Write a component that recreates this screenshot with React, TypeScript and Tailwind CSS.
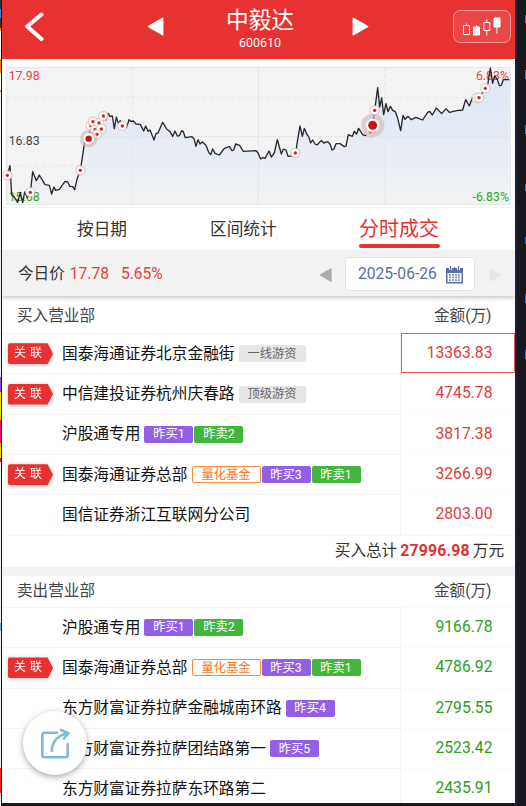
import clsx from "clsx";

type TagKind = "plain" | "fund" | "buy" | "sell";

interface Tag {
  kind: TagKind;
  label: string;
}

interface Seat {
  name: string;
  amount: string;
  linked?: boolean;
  active?: boolean;
  tags?: Tag[];
}

const buySeats: Seat[] = [
  {
    name: "国泰海通证券北京金融街",
    amount: "13363.83",
    linked: true,
    active: true,
    tags: [{ kind: "plain", label: "一线游资" }],
  },
  {
    name: "中信建投证券杭州庆春路",
    amount: "4745.78",
    linked: true,
    tags: [{ kind: "plain", label: "顶级游资" }],
  },
  {
    name: "沪股通专用",
    amount: "3817.38",
    tags: [
      { kind: "buy", label: "昨买1" },
      { kind: "sell", label: "昨卖2" },
    ],
  },
  {
    name: "国泰海通证券总部",
    amount: "3266.99",
    linked: true,
    tags: [
      { kind: "fund", label: "量化基金" },
      { kind: "buy", label: "昨买3" },
      { kind: "sell", label: "昨卖1" },
    ],
  },
  { name: "国信证券浙江互联网分公司", amount: "2803.00" },
];

const sellSeats: Seat[] = [
  {
    name: "沪股通专用",
    amount: "9166.78",
    tags: [
      { kind: "buy", label: "昨买1" },
      { kind: "sell", label: "昨卖2" },
    ],
  },
  {
    name: "国泰海通证券总部",
    amount: "4786.92",
    linked: true,
    tags: [
      { kind: "fund", label: "量化基金" },
      { kind: "buy", label: "昨买3" },
      { kind: "sell", label: "昨卖1" },
    ],
  },
  {
    name: "东方财富证券拉萨金融城南环路",
    amount: "2795.55",
    tags: [{ kind: "buy", label: "昨买4" }],
  },
  {
    name: "东方财富证券拉萨团结路第一",
    amount: "2523.42",
    tags: [{ kind: "buy", label: "昨买5" }],
  },
  { name: "东方财富证券拉萨东环路第二", amount: "2435.91" },
];

const tagStyles: Record<TagKind, string> = {
  plain: "bg-[#e6e6e6] text-[#666] w-[67px]",
  fund: "border border-[#f98a3c] bg-white text-[#f77a1d] w-[69px]",
  buy: "bg-[#935fe6] text-white w-[49px]",
  sell: "bg-[#43b53c] text-white w-[49px]",
};

// chart units are thirds of a pixel
const pricePoints =
  "22,345 30,317 35,405 42,410 53,427 61,397 68,428 74,396 82,412 91,400 98,335 109,362 118,345 135,374 148,376 155,402 162,381 167,391 178,388 195,364 203,366 210,379 218,380 224,389 231,358 241,331 255,240 266,236 272,200 280,190 290,215 300,190 310,168 318,180 324,160 330,169 337,168 343,206 349,171 355,190 361,182 367,196 380,202 387,179 392,184 400,183 408,192 421,193 431,213 437,198 444,214 450,210 462,240 468,221 474,219 488,187 500,207 510,215 518,229 525,213 532,228 538,227 545,212 550,215 556,233 576,230 582,236 588,259 594,239 600,252 607,246 618,256 626,277 632,284 638,267 645,280 658,285 673,265 688,260 696,272 701,270 707,252 719,256 730,274 768,272 774,278 782,297 788,293 795,295 807,273 814,291 823,279 832,239 844,282 850,267 858,270 864,289 886,287 892,245 900,198 907,229 913,205 920,222 926,230 932,249 938,240 945,252 951,255 964,241 971,249 983,245 990,252 996,270 1002,267 1008,251 1020,251 1033,260 1038,258 1045,224 1057,229 1063,214 1070,222 1076,205 1088,224 1096,227 1112,216 1118,195 1124,152 1133,83 1139,141 1145,114 1151,164 1158,131 1164,155 1171,139 1178,151 1186,155 1193,175 1202,212 1209,166 1215,178 1224,169 1234,179 1248,172 1268,180 1283,157 1289,154 1297,165 1309,144 1325,161 1338,146 1348,157 1370,152 1388,150 1397,119 1408,138 1417,113 1430,125 1438,113 1456,84 1463,75 1471,24 1478,70 1484,48 1492,58 1498,77 1504,76 1510,59 1528,59";

const markers = [
  [22, 346], [91, 397], [241, 331], [272, 197], [279, 185], [285, 209],
  [297, 189], [304, 207], [291, 223], [310, 168], [367, 198], [886, 279],
  [1111, 217], [1124, 151], [1430, 114], [1437, 113], [1456, 85],
];

function Triangle({ left, className }: { left?: boolean; className: string }) {
  return (
    <svg viewBox="0 0 16 18" className={className} fill="currentColor">
      <path
        d={left ? "M15 1v16L1 9z" : "M1 1v16L15 9z"}
        stroke="currentColor"
        strokeWidth="1"
        strokeLinejoin="round"
      />
    </svg>
  );
}

function Header() {
  return (
    <header className="flex h-[59px] shrink-0 items-start bg-[#e83131] text-white">
      <svg viewBox="0 0 20 30" className="mt-[12px] ml-[22px] h-[30px] w-[20px]">
        <path
          d="M17.500 2.500 3.200 14.500 17.500 27"
          fill="none"
          stroke="currentColor"
          strokeWidth="4"
          strokeLinecap="round"
          strokeLinejoin="round"
        />
      </svg>
      <Triangle left className="mt-[17px] ml-[103px] h-[19px] w-[17px]" />
      <div className="ml-[50px] flex w-[92px] flex-col items-center pt-[7px]">
        <h1 className="text-[22.7px] leading-[27px]">中毅达</h1>
        <p className="mt-[2px] text-[12.4px] leading-[14px]">600610</p>
      </div>
      <Triangle className="mt-[17px] ml-[46px] h-[19px] w-[17px]" />
      <div className="mt-[10px] ml-[84px] flex h-[33px] w-[58px] items-center justify-center rounded-[7px] border border-[#f59b9b] bg-[#ec4646]">
        <svg viewBox="0 0 40 20" className="h-[20px] w-[40px]" fill="none" stroke="white">
          <path d="M4.5 6.5v2M14.5 8v2M24.8 2.5v3M24.8 13.5v5M34.9 9v7.500" />
          <path d="M1.5 8.5h6v9h-6zM21.8 5.5h6v8h-6z" />
          <path d="M11.5 10h6v8h-6zM32 1h6v9h-6z" fill="white" />
        </svg>
      </div>
    </header>
  );
}

function PriceChart() {
  return (
    <svg viewBox="6 -3 1539 444" className="h-[148px] w-[513px] shrink-0">
      <defs>
        <linearGradient id="area" x1="0" y1="0" x2="0" y2="1">
          <stop offset="0" stopColor="#dbe8f8" />
          <stop offset="0.5" stopColor="#e5ebf5" />
          <stop offset="1" stopColor="#f1f2f3" />
        </linearGradient>
      </defs>
      <rect x="19" y="22" width="1512" height="411" fill="#f3f3f3" stroke="#e4e4e4" strokeWidth="3" />
      <polygon points={`22,432 ${pricePoints} 1528,432`} fill="url(#area)" />
      <g stroke="#e3e5e7" strokeWidth="3">
        <path d="M20 230H1531M775 22V433" />
        <path d="M20 113H1531M20 318H1531M398 22V433M1154 22V433" strokeDasharray="12 9" />
      </g>
      <g fontSize="37" fontFamily="Roboto">
        <text x="26" y="59" fill="#e94545">17.98</text>
        <text x="26" y="256" fill="#444">16.83</text>
        <text x="26" y="422" fill="#30a51b">15.68</text>
        <text x="1527" y="59" textAnchor="end" fill="#e94545">6.83%</text>
        <text x="1527" y="422" textAnchor="end" fill="#30a51b">-6.83%</text>
      </g>
      <polyline points={pricePoints} fill="none" stroke="#25282c" strokeWidth="4" strokeLinejoin="round" />
      {markers.map(([x, y]) => (
        <g key={`${x}-${y}`}>
          <circle cx={x} cy={y} r="16" fill="#dfbcbc" fillOpacity="0.7" />
          <circle cx={x} cy={y} r="12" fill="white" />
          <circle cx={x} cy={y} r="5" fill="#d61c23" />
        </g>
      ))}
      <circle cx="266" cy="236" r="26" fill="#d9b8b8" fillOpacity="0.65" />
      <circle cx="266" cy="236" r="16" fill="white" />
      <circle cx="266" cy="236" r="9.5" fill="#ce1212" />
      <circle cx="1118" cy="196" r="35" fill="#d9b8b8" fillOpacity="0.65" />
      <circle cx="1118" cy="196" r="20" fill="white" />
      <circle cx="1118" cy="196" r="13.5" fill="#ce1212" />
    </svg>
  );
}

function Tabs() {
  return (
    <nav className="flex h-[43px] shrink-0 border-t border-[#f4f4f4] text-[16.7px] leading-[44px] text-[#333]">
      <span className="ml-[75px] w-[133px]">按日期</span>
      <span className="w-[149px]">区间统计</span>
      <span className="flex w-[82px] flex-col text-[20px] text-[#e83131]">
        <span className="h-[35px] w-[82px] leading-[42px]">分时成交</span>
        <span className="mt-[1px] h-[4px] w-[81px] rounded-sm bg-[#e83131]" />
      </span>
    </nav>
  );
}

function DateBar() {
  return (
    <div className="relative flex h-[46px] shrink-0 items-center bg-[#f2f2f2] shadow-[0_2px_4px_rgba(0,0,0,0.22)]">
      <p className="w-[317px] pt-[4px] pl-[16px] text-[15.6px] whitespace-pre text-[#333]">
        今日价<span className="ml-[5px] text-[#e83c3c]">17.78</span>
        <span className="ml-[12px] text-[#e83c3c]">5.65%</span>
      </p>
      <Triangle left className="mt-[3px] h-[16px] w-[13px] text-[#aaa]" />
      <div className="mt-[2px] ml-[13px] flex h-[34px] w-[130px] items-center rounded border border-[#e3e3e3] bg-white pl-[12px] text-[15.6px] text-[#5a6da4]">
        <span className="mt-[2px]">2025-06-26</span>
        <svg viewBox="0 0 19 18" className="mt-[1px] ml-[8px] h-[18px] w-[19px]">
          <path d="M1 2h17v15.500H1z" fill="#5a6da4" />
          <path d="M2.500 7h14v9h-14z" fill="white" />
          <path d="M5.500 0v4M13.500 0v4" stroke="white" strokeWidth="3" />
          <path d="M5.500 0v4M9.500 1v3M13.500 0v4" stroke="#5a6da4" strokeWidth="1.3" />
          <path
            d="M5 8v7M8 8v7M11 8v7M14 8v7"
            stroke="#5a6da4"
            strokeWidth="1.5"
            strokeDasharray="1.7 0.9"
          />
        </svg>
      </div>
      <Triangle className="mt-[3px] ml-[14px] h-[16px] w-[13px] text-[#e6e6e6]" />
    </div>
  );
}

function SectionHead({ title, className }: { title: string; className: string }) {
  return (
    <div className={clsx("flex shrink-0 justify-between pr-[23.5px] pl-[15px] text-[15.6px] text-[#444]", className)}>
      <span>{title}</span>
      <span>金额(万)</span>
    </div>
  );
}

function LinkedBadge() {
  return (
    <div className="h-[21px] w-[45px] drop-shadow-[0_1px_2px_rgba(0,0,0,0.25)]">
      <div className="h-[21px] w-[45px] rounded-l-[2px] bg-[#e83131] pl-[6px] text-[12px] leading-[21px] tracking-[0.5px] whitespace-pre text-white [clip-path:polygon(0_0,88%_0,100%_50%,88%_100%,0_100%)]">
        关 联
      </div>
    </div>
  );
}

function SeatRow({ seat, color }: { seat: Seat; color: string }) {
  return (
    <div className="flex h-[40.35px] shrink-0">
      <div className="flex w-[399px] items-center border-t border-r border-[#f4f4f4] pl-[6px]">
        <div className="w-[54px] shrink-0">{seat.linked && <LinkedBadge />}</div>
        <span className="text-[15.7px] leading-[38px] whitespace-nowrap text-[#111]">{seat.name}</span>
        <div className="ml-[4px] flex gap-[1px]">
          {seat.tags?.map((tag) => (
            <span
              key={tag.label}
              className={clsx(
                "flex h-[17px] items-center justify-center rounded-[2px] text-[12.3px] leading-none whitespace-nowrap",
                tagStyles[tag.kind]
              )}
            >
              {tag.label}
            </span>
          ))}
        </div>
      </div>
      <div
        className={clsx(
          "flex-1 pr-[21.5px] text-right text-[15.7px] leading-[37px]",
          color,
          seat.active ? "border border-[#e85b5b]" : "border-t border-r border-t-[#fafafa] border-r-transparent"
        )}
      >
        {seat.amount}
      </div>
    </div>
  );
}

function ShareButton() {
  return (
    <button
      type="button"
      className="absolute top-[711px] left-[21px] flex size-[64px] items-center justify-center rounded-full bg-white shadow-[0_2px_6px_rgba(0,0,0,0.35)]"
    >
      <svg viewBox="0 0 30 31" className="h-[31px] w-[30px]" fill="none" stroke="#7eb9d8" strokeWidth="2.6">
        <path d="M17 4.8H4.5Q2.300 4.800 2.300 7v20q0 2.200 2.200 2.200h21q2.200 0 2.200-2.200V16" strokeLinecap="round" />
        <path d="M11.800 23C12 14 17.500 7.500 27 5.500" strokeLinecap="round" />
        <path d="m21 2 7.500 3.200L24 10.500" strokeLinecap="round" strokeLinejoin="round" />
      </svg>
    </button>
  );
}

export default function App() {
  return (
    <div className="flex h-[806px] w-[526px] overflow-hidden bg-[#181820] font-[Roboto,'Noto_Sans_CJK_SC',sans-serif]">
      {/* slivers of the window behind */}
      <div className="flex w-[2px] shrink-0">
        <div className="w-px bg-[linear-gradient(#30323c_0_9px,#3184e8_9px_18px,#30323c_18px_28px,#f48016_28px_31px,#fff_31px_59px,#f48016_59px_73px,#fff_73px_90px,#f48016_90px_92px,#eee_92px_377px,#8a4ae8_377px_392px,#fae000_392px_420px,#e7104f_420px_443px,#fae000_443px_458px,#e7104f_458px_462px,#eee_462px_623px,#78a8d8_623px_631px,#eee_631px_768px,#ee2222_768px_793px,#eee_793px)]" />
        <div className="w-px bg-[#15152b]" />
      </div>
      <div className="relative flex h-[803px] w-[513px] shrink-0 flex-col overflow-hidden bg-white">
        <Header />
        <PriceChart />
        <Tabs />
        <DateBar />
        <SectionHead title="买入营业部" className="h-[37px] pt-[1px] leading-[38px]" />
        {buySeats.map((seat) => (
          <SeatRow key={seat.name} seat={seat} color="text-[#e03b3b]" />
        ))}
        <div className="flex h-[32.25px] shrink-0 justify-end border-t border-[#f8f8f8] pr-[11px] text-[15.6px] leading-[30px] text-[#333]">
          买入总计
          <b className="mx-[3px] text-[15.8px] tracking-[0.2px] text-[#e03131]">27996.98</b>
          万元
        </div>
        <div className="h-[9px] shrink-0 bg-[#f2f2f2]" />
        <SectionHead title="卖出营业部" className="h-[31px] leading-[31px]" />
        {sellSeats.map((seat) => (
          <SeatRow key={seat.name} seat={seat} color="text-[#2f9c1c]" />
        ))}
        <ShareButton />
      </div>
      <div className="w-[2px] shrink-0 bg-[#201e35]" />
      <div className="flex flex-1 justify-end">
        <div className="w-px bg-[linear-gradient(transparent_0_15px,#3b86b8_15px_23px,transparent_23px_70px,#3b86b8_70px_79px,transparent_79px_125px,#3b86b8_125px_134px,transparent_134px_184px,#3b86b8_184px_191px,transparent_191px_237px,#2478e0_237px_244px,transparent_244px_294px,#2478e0_294px_303px,transparent_303px_350px,#2478e0_350px_359px,transparent_359px)]" />
      </div>
    </div>
  );
}
